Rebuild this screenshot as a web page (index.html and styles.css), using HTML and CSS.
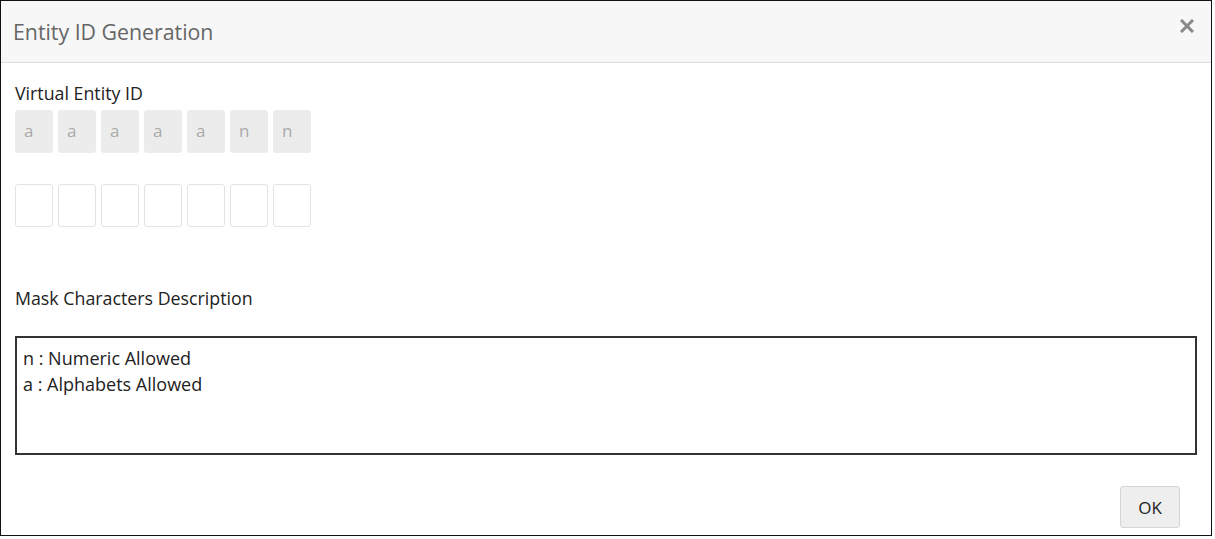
FILE: index.html
```html
<!DOCTYPE html>
<html>
<head>
<meta charset="utf-8">
<link rel="stylesheet" href="styles.css">
</head>
<body>
<div class="dialog">
  <div class="header">
    <div class="title">Entity ID Generation</div>
    <svg class="close" width="14" height="14" viewBox="0 0 14 14"><path d="M1 1 L13 13 M13 1 L1 13" stroke="#888" stroke-width="3" stroke-linecap="butt"/></svg>
  </div>
  <div class="content">
    <div class="label">Virtual Entity ID</div>
    <div class="cells mask">
      <div class="cell">a</div><div class="cell">a</div><div class="cell">a</div><div class="cell">a</div><div class="cell">a</div><div class="cell">n</div><div class="cell">n</div>
    </div>
    <div class="cells inputs">
      <div class="cell"></div><div class="cell"></div><div class="cell"></div><div class="cell"></div><div class="cell"></div><div class="cell"></div><div class="cell"></div>
    </div>
    <div class="label desc-label">Mask Characters Description</div>
    <div class="desc">
      <div>n : Numeric Allowed</div>
      <div>a : Alphabets Allowed</div>
    </div>
  </div>
  <div class="footer">
    <button class="ok">OK</button>
  </div>
</div>
</body>
</html>
```
FILE: styles.css
```css
html, body {
  margin: 0;
  padding: 0;
  background: #fff;
}
body {
  font-family: "Open Sans", "Noto Sans", sans-serif;
  color: #222;
}
.dialog {
  box-sizing: border-box;
  width: 1212px;
  height: 536px;
  border: 1px solid #111;
  display: flex;
  flex-direction: column;
  background: #fff;
}
.header {
  height: 61px;
  background: #f7f7f7;
  border-bottom: 1px solid #dcdcdc;
  display: flex;
  align-items: center;
  justify-content: space-between;
  padding: 0 17px 0 12px;
}
.title {
  font-size: 21.3px;
  color: #666;
  line-height: 28px;
}
.close {
  display: block;
  margin-top: -11px;
}
.content {
  padding: 0 14px;
  flex: 1;
}
.label {
  font-size: 17.8px;
  color: #222;
  margin-top: 19px;
  line-height: 22px;
}
.cells {
  display: flex;
  gap: 5px;
}
.cell {
  box-sizing: border-box;
  width: 38px;
  height: 43px;
  border-radius: 3px;
  font-size: 17px;
  line-height: 22px;
  color: #aaa;
  padding: 10px 0 0 9px;
}
.mask {
  margin-top: 6px;
}
.mask .cell {
  background: #ececec;
}
.inputs {
  margin-top: 31px;
}
.inputs .cell {
  border: 1px solid #e3e3e3;
  background: #fff;
}
.desc-label {
  margin-top: 60px;
}
.desc {
  box-sizing: border-box;
  margin-top: 27px;
  height: 119px;
  width: 1182px;
  border: 2px solid #333;
  padding: 7px 6px;
  font-size: 18px;
  line-height: 26px;
  color: #222;
}
.footer {
  display: flex;
  justify-content: flex-end;
  padding: 0 31px 7px 0;
}
.ok {
  box-sizing: border-box;
  width: 60px;
  height: 42px;
  background: #eee;
  border: 1px solid #d5d5d5;
  border-radius: 3px;
  font-family: "Open Sans", "Noto Sans", sans-serif;
  font-size: 17px;
  color: #222;
}
```
